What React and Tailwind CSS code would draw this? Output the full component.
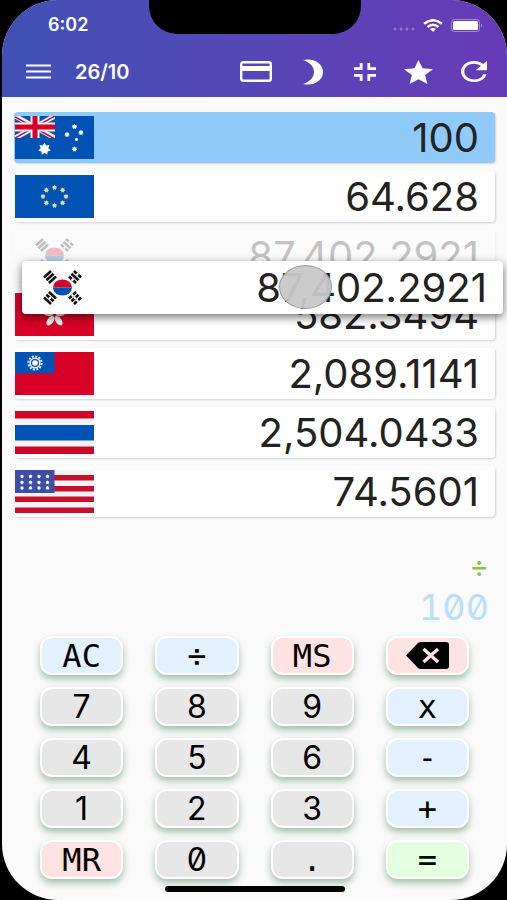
import { useState } from 'react';

function Star({ x, y, r, fill = '#fff' }) {
  const points = [];
  for (let i = 0; i < 14; i++) {
    const radius = i % 2 === 0 ? r : r * 0.6;
    const angle = (Math.PI * i) / 7 - Math.PI / 2;
    points.push(`${x + radius * Math.cos(angle)},${y + radius * Math.sin(angle)}`);
  }
  return <polygon points={points.join(' ')} fill={fill} />;
}

function Trigram({ x, y, angle, broken }) {
  return (
    <g transform={`translate(${x} ${y}) rotate(${angle})`} fill="#111">
      {[-5, -1.3, 2.4].map((top, i) => (
        <g key={top}>
          <rect x="-4.8" y={top} width="9.6" height="2.6" />
          {broken.includes(i) && <rect x="-1" y={top} width="2" height="2.6" fill="#fff" />}
        </g>
      ))}
    </g>
  );
}

const FLAGS = {
  AUD: (
    <>
      <rect width="79" height="43" fill="#0052b4" />
      <svg width="40" height="22" viewBox="0 0 40 22">
        <path d="M0 0L40 22M40 0L0 22" stroke="#f0f0f0" strokeWidth="5" />
        <path d="M0 1L40 23M40 0L0 22" stroke="#d80027" strokeWidth="1.5" />
        <path d="M20 0V22M0 11H40" stroke="#f0f0f0" strokeWidth="9" />
        <path d="M20 0V22M0 11H40" stroke="#d80027" strokeWidth="5" />
      </svg>
      <Star x={29.5} y={33} r={6.5} />
      <Star x={59.5} y={10.5} r={3} />
      <Star x={52} y={18.5} r={3} />
      <Star x={66} y={16.5} r={3} />
      <Star x={61.5} y={23.5} r={2} />
      <Star x={59.5} y={33} r={3} />
    </>
  ),
  EUR: (
    <>
      <rect width="79" height="43" fill="#0052b4" />
      {[0, 1, 2, 3, 4, 5, 6, 7].map((i) => (
        <Star
          key={i}
          x={39.5 + 11.5 * Math.cos((i * Math.PI) / 4)}
          y={21.5 + 9 * Math.sin((i * Math.PI) / 4)}
          r={2.8}
          fill="#dfdc9a"
        />
      ))}
    </>
  ),
  KRW: (
    <>
      <rect width="79" height="43" fill="#fff" />
      <path d="M30 21.5A9.5 8 0 0 1 49 21.5Z" fill="#d80027" />
      <path d="M30 21.5A9.5 8 0 0 0 49 21.5Z" fill="#0052b4" />
      <Trigram x={27} y={11} angle={-42} broken={[]} />
      <Trigram x={52} y={11} angle={42} broken={[0, 2]} />
      <Trigram x={27} y={32} angle={42} broken={[1]} />
      <Trigram x={52} y={32} angle={-42} broken={[0, 1, 2]} />
    </>
  ),
  HKD: (
    <>
      <rect width="79" height="43" fill="#d80027" />
      {[0, 72, 144, 216, 288].map((angle) => (
        <ellipse
          key={angle}
          cx="39.5"
          cy="15"
          rx="3"
          ry="5.5"
          fill="#f0f0f0"
          transform={`rotate(${angle} 39.5 22)`}
        />
      ))}
    </>
  ),
  TWD: (
    <>
      <rect width="79" height="43" fill="#d80027" />
      <rect width="39.5" height="21.5" fill="#0052b4" />
      <circle cx="20" cy="11" r="6.6" fill="none" stroke="#e8f0fa" strokeWidth="2" strokeDasharray="2 1.46" />
      <circle cx="20" cy="11" r="4.8" fill="none" stroke="#e8f0fa" strokeWidth="1.5" />
      <circle cx="20" cy="11" r="2.8" fill="#fff" />
    </>
  ),
  THB: (
    <>
      <rect width="79" height="43" fill="#f4f4f4" />
      <rect width="79" height="7.5" fill="#ce0726" />
      <rect y="14" width="79" height="15.5" fill="#0052b4" />
      <rect y="35.5" width="79" height="7.5" fill="#ce0726" />
    </>
  ),
  USD: (
    <>
      <rect width="79" height="43" fill="#f4f4f4" />
      {[5, 16, 26.5, 37.5].map((y) => (
        <rect key={y} y={y} width="79" height="5.5" fill="#c8102e" />
      ))}
      <rect width="39.5" height="23" fill="#3a4fa5" />
      {[6.5, 12.5, 18].map((y) =>
        [7, 15.5, 24, 32.5].map((x) => <Star key={`${x}-${y}`} x={x} y={y} r={2.2} />)
      )}
    </>
  ),
};

function Flag({ code }) {
  return (
    <svg viewBox="0 0 79 43" className="h-[43px] w-[79px] shrink-0" role="img" aria-label={code}>
      {FLAGS[code]}
    </svg>
  );
}

const RATES = [
  { code: 'AUD', value: '100', selected: true },
  { code: 'EUR', value: '64.628' },
  { code: 'KRW', value: '87,402.2921', dragging: true },
  { code: 'HKD', value: '582.3494' },
  { code: 'TWD', value: '2,089.1141' },
  { code: 'THB', value: '2,504.0433' },
  { code: 'USD', value: '74.5601' },
];

function RateRow({ rate }) {
  return (
    <div
      className={`flex h-[51px] items-center justify-between rounded pr-4 pl-px shadow-[1px_1px_2px_rgba(0,0,0,0.15)] ${
        rate.selected ? 'bg-[#90caf9]' : 'bg-white'
      }`}
    >
      <Flag code={rate.code} />
      <span className="text-[40px] leading-[48px] text-[#222]">{rate.value}</span>
    </div>
  );
}

function DraggedRow({ rate }) {
  return (
    <div className="absolute top-[31px] -right-2 left-2 z-10 flex h-[53px] items-center justify-between rounded bg-white pr-4 pl-px shadow-[0_3px_10px_rgba(0,0,0,0.55)]">
      <Flag code={rate.code} />
      <span className="text-[40px] leading-[48px] text-[#222]">{rate.value}</span>
      <span className="absolute top-1 right-[171px] h-11 w-[53px] rounded-[50%] border border-[#999] bg-[#c8c8c8]/95" />
    </div>
  );
}

const KEYS = [
  ['AC', 'blue'], ['÷', 'blue'], ['MS', 'red'], ['back', 'red'],
  ['7', 'gray'], ['8', 'gray'], ['9', 'gray'], ['x', 'blue'],
  ['4', 'gray'], ['5', 'gray'], ['6', 'gray'], ['-', 'blue'],
  ['1', 'gray'], ['2', 'gray'], ['3', 'gray'], ['+', 'blue'],
  ['MR', 'red'], ['0', 'gray'], ['.', 'gray'], ['=', 'green'],
];

const KEY_COLORS = {
  blue: 'bg-[#e3f1ff]',
  red: 'bg-[#ffe2e2]',
  gray: 'bg-[#e7e7e7]',
  green: 'bg-[#e2ffe0]',
};

function Key({ label, color, onPress }) {
  const digit = /^[0-9]$/.test(label);
  return (
    <button
      type="button"
      aria-label={label === 'back' ? 'Backspace' : undefined}
      onClick={() => onPress(label)}
      className={`flex h-[39px] items-center justify-center rounded-xl border-2 border-white text-[32px] leading-none text-black shadow-[0_4px_7px_rgba(60,120,75,0.45)] ${KEY_COLORS[color]} ${
        digit ? 'font-[Inter,sans-serif] slashed-zero' : "font-['DejaVu_Sans_Mono',monospace]"
      }`}
    >
      {label === 'back' ? (
        <svg viewBox="0 0 43 27" className="h-[27px] w-[43px]">
          <path d="M12 1Q13 0 15 0H40Q43 0 43 3V24Q43 27 40 27H15Q13 27 12 26L0 13.5Z" fill="#000" />
          <path d="M17.5 7L32 20M32 7L17.5 20" stroke="#ffe2e2" strokeWidth="3.4" />
        </svg>
      ) : (
        label
      )}
    </button>
  );
}

function StatusBar() {
  return (
    <div className="flex h-[50px] items-center justify-between pr-6 pl-[46px] text-lg font-semibold">
      <span>6:02</span>
      <div className="flex items-center gap-2">
        <svg viewBox="0 0 22 4" className="mt-2 h-1 w-[22px]" fill="#fff" opacity="0.3">
          <circle cx="2" cy="2" r="1.5" />
          <circle cx="8" cy="2" r="1.5" />
          <circle cx="14" cy="2" r="1.5" />
          <circle cx="20" cy="2" r="1.5" />
        </svg>
        <svg viewBox="0 0 20 13" className="h-[13px] w-5" fill="none" stroke="#fff" strokeWidth="2.4">
          <path d="M1 4.8Q10 -2.4 19 4.8" />
          <path d="M4.5 8Q10 3.6 15.5 8" />
          <path d="M7 10Q10 7.8 13 10L10 13Z" fill="#fff" stroke="none" />
        </svg>
        <svg viewBox="0 0 32 13" className="h-[13px] w-8">
          <rect x="0.5" y="0.5" width="28" height="12" rx="3" fill="none" stroke="#fff" opacity="0.4" />
          <rect x="2" y="2" width="25" height="9" rx="1.5" fill="#fff" />
          <path d="M30 4.5Q32 6.5 30 8.5Z" fill="#fff" opacity="0.5" />
        </svg>
      </div>
    </div>
  );
}

function Toolbar() {
  return (
    <div className="flex h-[47px] items-center justify-between pr-5 pb-1 pl-6">
      <div className="flex items-center gap-6">
        <button type="button" aria-label="Menu">
          <svg viewBox="0 0 25 15" className="h-[15px] w-[25px]" stroke="#fff" strokeWidth="2.2">
            <path d="M0 1.5H25M0 7.5H25M0 13.5H25" />
          </svg>
        </button>
        <h1 className="text-xl font-semibold">26/10</h1>
      </div>
      <div className="flex items-center gap-7">
        <button type="button" aria-label="Cards">
          <svg viewBox="0 0 32 21" className="h-[21px] w-8">
            <rect x="1.2" y="1.2" width="29.6" height="18.6" rx="2" fill="none" stroke="#fff" strokeWidth="2.4" />
            <rect x="1" y="5" width="30" height="5" fill="#fff" />
          </svg>
        </button>
        <button type="button" aria-label="Dark mode" className="flex w-[26px] justify-center">
          <svg viewBox="0 0 20 26" className="h-[26px] w-5">
            <path d="M0 1C10 -1.500 20 4 20 13C20 22 10 27.500 0 25C6.500 23 11 18.500 11 13C11 7.500 6.500 3 0 1Z" fill="#fff" />
          </svg>
        </button>
        <button type="button" aria-label="Collapse">
          <svg viewBox="0 0 22 18" className="h-[18px] w-[22px]" fill="none" stroke="#fff" strokeWidth="2.8">
            <path d="M0 5.600H7.200V0M14.800 0V5.600H22M0 12.400H7.200V18M14.800 18V12.400H22" />
          </svg>
        </button>
        <button type="button" aria-label="Favourites">
          <svg viewBox="2 2 20 19" preserveAspectRatio="none" className="h-6 w-[29px]">
            <path d="M12 17.27L18.18 21l-1.640-7.030L22 9.240l-7.190-.61L12 2 9.190 8.630 2 9.240l5.460 4.730L5.820 21z" fill="#fff" />
          </svg>
        </button>
        <button type="button" aria-label="Refresh">
          <svg viewBox="4 4 16 16" preserveAspectRatio="none" className="h-[21px] w-[26px]">
            <path d="M17.650 6.350A7.958 7.958 0 0 0 12 4c-4.420 0-7.990 3.580-7.990 8s3.570 8 7.990 8c3.730 0 6.840-2.550 7.730-6h-2.080A5.990 5.990 0 0 1 12 18c-3.310 0-6-2.690-6-6s2.690-6 6-6c1.660 0 3.140.69 4.220 1.780L13 11h7V4l-2.350 2.350z" fill="#fff" />
          </svg>
        </button>
      </div>
    </div>
  );
}

export default function App() {
  const [entry, setEntry] = useState('100');

  function press(label) {
    if (label === 'AC') setEntry('0');
    else if (label === 'back') setEntry((v) => v.slice(0, -1) || '0');
    else if (/^[0-9.]$/.test(label)) setEntry((v) => (v === '0' ? label : v + label));
  }

  return (
    <div className="flex min-h-screen bg-black pl-0.5 font-[Inter,sans-serif]">
      <div className="relative flex flex-1 flex-col overflow-hidden rounded-[56px] bg-[#fafafa]">
        <header className="bg-linear-to-r from-[#3f51b5] to-[#673ab7] text-white">
          <StatusBar />
          <Toolbar />
        </header>
        <div className="absolute top-0 left-1/2 h-[34px] w-[212px] -translate-x-1/2 rounded-b-[28px] bg-black" />

        <main className="flex flex-1 flex-col pt-[15px] pb-[21px]">
          <ul className="flex flex-col gap-2 px-3">
            {RATES.map((rate) => (
              <li key={rate.code} className="relative">
                <div className={rate.dragging ? 'opacity-25' : ''}>
                  <RateRow rate={rate} />
                </div>
                {rate.dragging && <DraggedRow rate={rate} />}
              </li>
            ))}
          </ul>

          <div className="mt-auto flex flex-col items-end px-[18px]">
            <span className="text-3xl leading-9 text-[#8bc34a]">÷</span>
            <output className="text-4xl leading-[46px] text-[#bbdefb] slashed-zero tabular-nums">{entry}</output>
          </div>

          <div className="mt-1.5 grid grid-cols-4 gap-x-8 gap-y-3 px-[38px]">
            {KEYS.map(([label, color]) => (
              <Key key={label} label={label} color={color} onPress={press} />
            ))}
          </div>
        </main>
        <div className="absolute bottom-2 left-1/2 h-1.5 w-[180px] -translate-x-1/2 rounded-full bg-black" />
      </div>
    </div>
  );
}
